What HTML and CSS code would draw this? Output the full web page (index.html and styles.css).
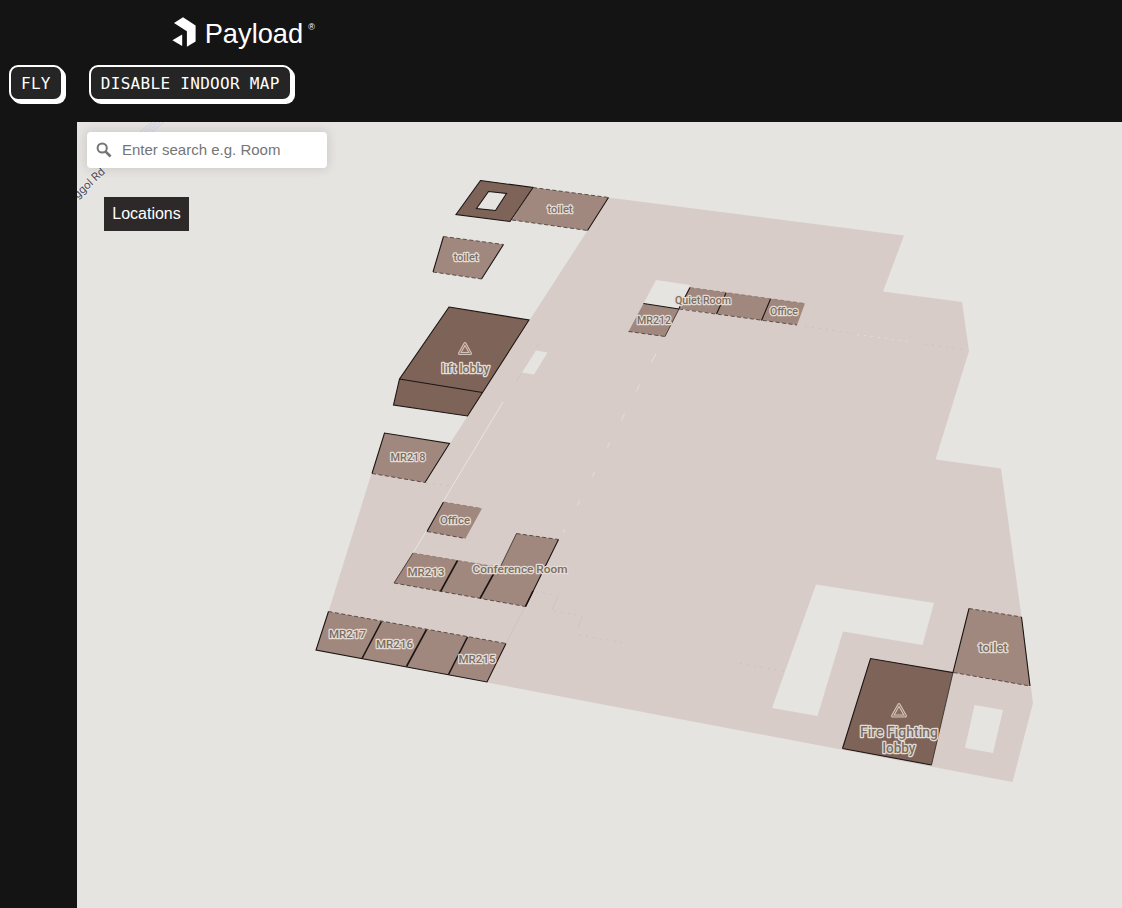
FILE: index.html
```html
<!DOCTYPE html>
<html lang="en">
<head>
<meta charset="utf-8">
<title>Indoor map</title>
<link rel="stylesheet" href="styles.css">
</head>
<body>
<header class="header">
  <svg class="logo" viewBox="172 14 146 38" role="img" aria-label="Payload">
    <path d="M183 17.2 195.6 25.4V41.4L186.9 46.8V31.2L174 23Z"/>
    <path d="M182.2 34.4V46.1L172.4 40.3Z"/>
    <text x="204.7" y="43.3" class="logo-name" textLength="98.5" lengthAdjust="spacingAndGlyphs">Payload</text>
    <text x="308.2" y="29.6" class="logo-mark">®</text>
  </svg>
  <nav class="actions">
    <button class="btn">FLY</button>
    <button class="btn">DISABLE INDOOR MAP</button>
  </nav>
</header>
<main class="map">
  <svg class="plan" viewBox="77 122 1045 786">
    <g class="road">
      <path d="M140 132 152 122M144 132 156 122M148 132 160 122M152 132 164 122"/>
      <path class="road-line" d="M139 132H149M142 129H153M146 126H157M150 124H160"/>
      <text transform="translate(77.5 199) rotate(-43)">ggol Rd</text>
    </g>
    <path class="floor" fill-rule="evenodd" d="M608 197.5 904 235.5 883 291.5 962 302 969 351 935.5 459.5 1001 468.5 1021.5 617 1033 703 1012.5 782 487 682.5 506 643.5 328.5 611.5 371.5 473.5 425 482 587.500 230.500Z
      M656 280 690 285 679 309.500 643.500 303.500Z M536 350.500 547.500 352.500 534 374.500 522 372.500Z
      M816 584.500 934 603 922.500 645 843 631.500 817.500 716 772 708Z
      M974.500 705 1003 710 993 753 965 748Z"/>
    <path class="seam" d="M503 402 453 485L443 502M427 530 413 553"/>
    <path class="seam faint" d="M656 353.500 651.500 362.500M639.500 384.500 636.500 391.500M624.500 413.500 621.500 420.500M609.500 442.500 607.500 447.500M594.500 471.500 592.500 476.500M579.500 500.500 577.500 505.500M564.500 529.500 563.500 532.500"/>
    <path class="trace" d="M805 326 855 334M925 344 966 350M426 483 452 486M536 592 557 595M554 611 582 616M579 635 625 643M740 663.500 785 671.500"/>
    <path class="trace solid" d="M538.500 344 537 347M521 374 516 381M558 596 552 610M582 617 578 627M525 607 506 643"/>
    <path class="trace pale" d="M857 334.500 911 342"/>
    <g class="room">
      <path d="M533 187.500 608.500 197.500 587.500 230.500 512 220Z"/>
      <path d="M443.500 236.500 503.500 244.500 481.500 279 433 272Z"/>
      <path d="M384.500 433 449.500 443.500 425 482.500 372 473.500Z"/>
      <path d="M643.500 303.500 679 309 665 336.500 628.500 331.500Z"/>
      <path d="M690 287.500 805 303.500 797 325 679 308.500Z"/>
      <path d="M443.500 502 482 508.500 465.500 538.500 427 531.500Z"/>
      <path d="M413 553 500 567.500 516.500 533.500 558.500 539.500 525.500 606.500 394 583Z"/>
      <path d="M328.500 611.500 506 643.500 487 682 316 650Z"/>
      <path d="M969 608.500 1021.500 617 1030 686 953.500 672.500Z"/>
    </g>
    <g class="lobby">
      <path fill-rule="evenodd" d="M480.500 180.500 533 187.500 510 221.500 456 214.500Z M488.500 191.500 506.500 193.500 495.500 210.500 476.500 208.500Z"/>
      <path d="M449 307 529 320 467.500 416 393.500 405 399.500 379Z"/>
      <path d="M870.500 658.500 953 672.500 931.500 765 842.500 748.500Z"/>
    </g>
    <path class="edge" d="M480.500 180.500 533 187.500 510 221.500 456 214.500ZM488.500 191.500 506.500 193.500 495.500 210.500 476.500 208.500ZM449 307 529 320 467.500 416 393.500 405 399.500 379ZM399.500 379 482.500 392.500M842.500 748.500 870.500 658.500 953 672.500 969 608.500M1021.500 617 1030 686M842.500 748.500 931.500 765M587.500 230.500 608.500 197.500M433 272 443.500 236.500M503.500 244.500 481.500 279M372 473.500 384.500 433 449.500 443.500 425 482.500M643.500 303.500 679 309M690 287.500 679 308.500M726 293 716.500 314M770.500 299 761.500 320.500M427 531.500 443.500 502M558.500 539.500 525.500 606.500M328.500 611.500 316 650 487 682 506 643.500"/>
    <path class="edge thin" d="M931.500 765 953 672.500M679 309 665 336.500M413 553 394 583M500 567.500 516.500 533.500"/>
    <path class="edge thick" d="M457.500 560.500 440.500 591.500M493.500 574 480 598.500M533 591 525.500 606.500M381.500 621.500 362 658.500M426.500 629.500 406.500 666.500M467.500 637 448.500 674.500"/>
    <path class="edge dashed" d="M533 187.500 608.500 197.500M512 220 587.500 230.500M443.500 236.500 503.500 244.500M433 272 481.500 279M372 473.500 425 482.500M628.500 331.500 665 336.500M679 309 797 325M427 531.500 465.500 538.500M516.500 533.500 558.500 539.500M394 583 525.500 606.500M328.500 611.500 506 643.500M969 608.500 1021.500 617M953.500 672.500 1030 686"/>
    <path class="edge dashed soft" d="M690 287.500 805 303.500M443.500 502 482 508.500M413 553 500 567.500"/>
    <g class="marker">
      <path class="halo" d="M465 343.500 470.500 353.500H459.500Z"/>
      <path d="M465 343.500 470.500 353.500H459.500ZM465 348.500 467 351.500H463Z"/>
      <path class="halo" d="M899 704.500 905.500 716H892.500Z"/>
      <path d="M899 704.500 905.500 716H892.500ZM899 710 901.500 713.500H896.500Z"/>
    </g>
    <g class="label">
      <text x="560" y="212.500" textLength="25" lengthAdjust="spacingAndGlyphs">toilet</text>
      <text x="466" y="261" textLength="25" lengthAdjust="spacingAndGlyphs">toilet</text>
      <text x="465.500" y="372.500" textLength="48" lengthAdjust="spacingAndGlyphs" class="medium">lift lobby</text>
      <text x="408" y="461" textLength="35" lengthAdjust="spacingAndGlyphs">MR218</text>
      <text x="703" y="304" textLength="56" lengthAdjust="spacingAndGlyphs">Quiet Room</text>
      <text x="654" y="324" textLength="34" lengthAdjust="spacingAndGlyphs">MR212</text>
      <text x="784" y="315" textLength="28" lengthAdjust="spacingAndGlyphs">Office</text>
      <text x="455" y="524" textLength="30" lengthAdjust="spacingAndGlyphs">Office</text>
      <text x="426" y="576" textLength="37" lengthAdjust="spacingAndGlyphs">MR213</text>
      <text x="520" y="573" textLength="95" lengthAdjust="spacingAndGlyphs">Conference Room</text>
      <text x="347.500" y="638" textLength="37" lengthAdjust="spacingAndGlyphs">MR217</text>
      <text x="394.500" y="648" textLength="37" lengthAdjust="spacingAndGlyphs">MR216</text>
      <text x="477" y="663" textLength="37" lengthAdjust="spacingAndGlyphs">MR215</text>
      <text x="993" y="652" textLength="29" lengthAdjust="spacingAndGlyphs" class="medium">toilet</text>
      <text x="899" y="737" textLength="78" lengthAdjust="spacingAndGlyphs" class="large">Fire Fighting</text>
      <text x="899" y="753" textLength="33" lengthAdjust="spacingAndGlyphs" class="large">lobby</text>
    </g>
  </svg>
  <div class="controls">
    <label class="search">
      <svg class="search-icon" viewBox="0 0 16 16"><circle cx="6.200" cy="6" r="4.600"/><path d="M9.500 9.500 14.600 14.500"/></svg>
      <input class="search-input" type="text" placeholder="Enter search e.g. Room">
    </label>
    <button class="locations">Locations</button>
  </div>
</main>
</body>
</html>
```
FILE: styles.css
```css
* { box-sizing: border-box; }

body {
  margin: 0;
  height: 908px;
  overflow: hidden;
  background: #141414;
  font-family: "Liberation Sans", Arial, sans-serif;
}

.header {
  height: 122px;
  padding: 14px 0 0 9px;
}

.logo {
  display: block;
  width: 146px;
  height: 38px;
  margin-left: 163px;
  fill: #fff;
}

.logo-name { font-size: 28.5px; }
.logo-mark { font-size: 9px; }

.actions {
  display: flex;
  gap: 26px;
  margin-top: 13px;
}

.btn {
  height: 36px;
  padding: 1px 10px 0;
  border: 2px solid #fff;
  border-radius: 9px;
  background: #252525;
  color: #fff;
  box-shadow: 1px 1px 0 #fff, 2px 2px 0 #fff, 3px 3px 0 #fff;
  font: 16px/31px "DejaVu Sans Mono", monospace;
  letter-spacing: 0.3px;
  white-space: nowrap;
}

.map {
  display: grid;
  width: 1045px;
  height: 786px;
  margin-left: 77px;
  background: #e5e4e0;
  overflow: hidden;
}

.plan, .controls { grid-area: 1 / 1; }

.plan {
  width: 1045px;
  height: 786px;
}

.road { fill: none; stroke: #d3d1e3; stroke-width: 1; }
.road-line { stroke: #dcdae6; }
.road text {
  fill: #4d4d55;
  stroke: #efeef2;
  stroke-width: 1.5;
  paint-order: stroke;
  font: 11.5px Roboto, sans-serif;
}

.floor { fill: #d8ccc8; }
.room { fill: #a1887e; }
.lobby { fill: #7e6359; }

.seam { fill: none; stroke: #e9e5e2; stroke-width: 1; }
.faint { stroke: #e5dedb; }
.trace { fill: none; stroke: #c9bebb; stroke-width: 0.8; stroke-dasharray: 2 5; }
.solid { stroke-dasharray: none; stroke: #cdc1bd; }
.pale { stroke: #e6dfdc; }

.edge { fill: none; stroke: #1b1513; stroke-width: 1.1; }
.thin { stroke-width: 0.7; }
.thick { stroke-width: 1.6; }
.dashed { stroke: #40332f; stroke-width: 0.8; stroke-dasharray: 4 2.5; }
.soft { stroke: #7b675f; stroke-width: 0.6; }

.marker path {
  fill: none;
  stroke: #93755f;
  stroke-width: 1;
  stroke-linejoin: round;
}

.marker .halo {
  stroke: #d3c4bb;
  stroke-width: 3;
}

.label {
  fill: #7d6d5f;
  stroke: #e3dcd5;
  stroke-width: 2.6;
  stroke-linejoin: round;
  paint-order: stroke;
  text-anchor: middle;
  font: 500 11.5px Roboto, sans-serif;
}

.label .medium { font-size: 12.5px; }
.label .large { font-size: 14px; }

.controls {
  display: flex;
  flex-direction: column;
  align-items: flex-start;
  padding: 10px;
  z-index: 1;
}

.search {
  display: flex;
  align-items: center;
  gap: 10px;
  width: 240px;
  height: 36px;
  padding: 0 9px;
  border-radius: 4px;
  background: #fff;
  box-shadow: 0 0 10px 2px rgba(0, 0, 0, 0.1);
}

.search-icon {
  flex: none;
  width: 16px;
  height: 16px;
  fill: none;
  stroke: #757575;
  stroke-width: 2;
}

.search-icon path { stroke-width: 2.6; }

.search-input {
  flex: 1;
  min-width: 0;
  padding: 0 0 2px;
  border: 0;
  outline: 0;
  background: transparent;
  font: 15px "Liberation Sans", Arial, sans-serif;
}

.search-input::placeholder { color: #757575; }

.locations {
  width: 85px;
  height: 34px;
  margin: 29px 0 0 17px;
  padding: 0 0 1px;
  border: 0;
  background: #2d2928;
  color: #fff;
  font: 16px "Liberation Sans", Arial, sans-serif;
}
```
